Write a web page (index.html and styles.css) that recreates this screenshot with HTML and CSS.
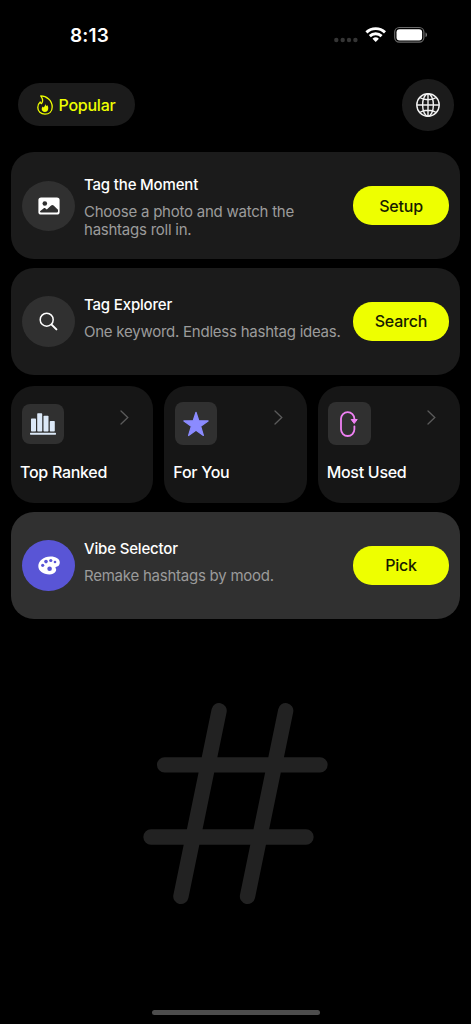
FILE: index.html
```html
<!DOCTYPE html>
<html lang="en">
<head>
<meta charset="utf-8">
<title>Hashtags</title>
<link rel="stylesheet" href="styles.css">
</head>
<body>
<div class="screen">
  <div class="status">
    <span class="time">8:13</span>
    <svg class="status-icons" width="96" height="20" viewBox="332 25 96 20">
      <g fill="#353535"><circle cx="336.3" cy="40" r="2.2"/><circle cx="342.7" cy="40" r="2.2"/><circle cx="349" cy="40" r="2.2"/><circle cx="355.4" cy="40" r="2.2"/></g>
      <g fill="none" stroke="#fff" stroke-width="2.9"><path d="M366.4 32.400a13.400 13.400 0 0 1 18.600 0"/><path d="M369.800 36.100a8.600 8.600 0 0 1 11.800 0"/></g>
      <path fill="#fff" d="M372.500 38.700a4.800 4.800 0 0 1 6.400 0l-3.200 3.300z"/>
      <rect x="394.700" y="27.500" width="29.200" height="14.600" rx="4.600" fill="none" stroke="#6a6a6a" stroke-width="1.200"/>
      <rect x="396.500" y="29.200" width="25.600" height="11.200" rx="3" fill="#fff"/>
      <path fill="#777" d="M425.500 32.500c2 .6 2 4 0 4.600z"/>
    </svg>
  </div>
  <header class="header">
    <button class="popular">
      <svg width="16" height="20" viewBox="0 0 16 20"><path fill="none" stroke="#eeff00" stroke-width="1.300" stroke-linejoin="round" d="M3.700.9C9.500.9 15.200 5.500 15.200 12c0 4.400-3 7.200-7.200 7.200S.8 16.400.8 12.500c0-2.300.9-4.100 2.400-5.500.2.900.7 1.400 1.300 1.600C6.200 6.600 5.700 3.500 3.700.9z"/><path fill="#eeff00" d="M8.300 8.500c.1 1.200.5 1.800 1.200 2.500.4-.2.5-.5.600-.9 1 1.200 1.300 2.500 1.100 3.800-.3 1.900-1.600 3-3.300 3-1.900 0-3.200-1.100-3.200-2.900 0-1.100.5-1.900 1.200-2.500l.6.9c1.200-.9 1.800-2.300 1.800-3.900z"/></svg>
      <span>Popular</span>
    </button>
    <button class="globe" aria-label="Language">
      <svg width="24" height="24" viewBox="0 0 24 24" fill="none" stroke="#f2f2f2" stroke-width="1.400"><circle cx="12" cy="12" r="11.200"/><ellipse cx="12" cy="12" rx="5.400" ry="11.200"/><path d="M12 .8v22.400M.8 12h22.400M3.700 4.500c4.500 3 12.100 3 16.600 0M3.700 19.500c4.500-3 12.100-3 16.600 0"/></svg>
    </button>
  </header>
  <main class="content">
    <section class="card card-photo">
      <span class="badge badge-photo"><svg width="22" height="18" viewBox="0 0 22 18"><rect x=".4" y=".4" width="21.200" height="17.200" rx="2.700" fill="#fff"/><circle cx="6.800" cy="6.500" r="2.300" fill="#303030"/><path fill="#303030" d="M2 14.300l3.500-2.900c.7-.6 1.300-.6 2 0l1.300 1.100 4.300-4.100c.8-.7 1.700-.7 2.500 0l4.400 4.300v1.500c0 .9-.5 1.400-1.400 1.400H3.400c-.9 0-1.400-.4-1.400-1.300z"/></svg></span>
      <div class="copy"><h2>Tag the Moment</h2><p>Choose a photo and watch the<br>hashtags roll in.</p></div>
      <button class="action">Setup</button>
    </section>
    <section class="card card-explorer">
      <span class="badge"><svg width="19" height="19" viewBox="0 0 19 19" fill="none" stroke="#fff" stroke-linecap="round"><circle cx="7.700" cy="7.700" r="6.500" stroke-width="1.500"/><path stroke-width="2" d="M12.600 12.600l4.800 4.800"/></svg></span>
      <div class="copy"><h2>Tag Explorer</h2><p>One keyword. Endless hashtag ideas.</p></div>
      <button class="action">Search</button>
    </section>
    <div class="tiles">
      <section class="tile">
        <div class="tile-top"><span class="square square-chart"><svg width="26" height="22" viewBox="0 0 26 22" fill="#dce9f8"><rect x="1" y="5.500" width="5" height="13" rx=".7"/><rect x="7.200" y=".3" width="5" height="18.200" rx=".7"/><rect x="13.500" y="2.800" width="5" height="15.700" rx=".7"/><rect x="19.800" y="8" width="5" height="10.500" rx=".7"/><rect x="0" y="19.800" width="26" height="1.900" rx=".6"/></svg></span><svg class="chevron" width="9" height="15" viewBox="0 0 9 15"><path d="M1 1l6.800 6.500L1 14"/></svg></div>
        <h2>Top Ranked</h2>
      </section>
      <section class="tile">
        <div class="tile-top"><span class="square"><svg width="26" height="26" viewBox="0 0 26 26"><path fill="#8b8bff" stroke="#8b8bff" stroke-width="1.200" stroke-linejoin="round" d="M13 1.300l2.800 8.500 9.300.1-7.400 5.400 2.700 9.200-7.400-5.300-7.400 5.300 2.700-9.200L.9 9.900l9.300-.1z"/></svg></span><svg class="chevron" width="9" height="15" viewBox="0 0 9 15"><path d="M1 1l6.800 6.500L1 14"/></svg></div>
        <h2>For You</h2>
      </section>
      <section class="tile">
        <div class="tile-top"><span class="square"><svg width="18" height="26" viewBox="0 0 18 26"><path fill="none" stroke="#f081f4" stroke-width="1.800" stroke-linecap="round" d="M14.400 9V7.800A6.700 6.700 0 0 0 1 7.800v10.500a6.700 6.700 0 0 0 13.400 0v-3"/><path fill="#f081f4" stroke="#f081f4" stroke-linejoin="round" d="M11.200 8.500h6l-3 4z"/></svg></span><svg class="chevron" width="9" height="15" viewBox="0 0 9 15"><path d="M1 1l6.800 6.500L1 14"/></svg></div>
        <h2>Most Used</h2>
      </section>
    </div>
    <section class="card card-vibe">
      <span class="badge badge-vibe"><svg width="22" height="19" viewBox="0 0 22 19"><path fill="#fff" d="M12.500.5c5.500 0 9.300 2.500 9.300 6 0 2.300-1.400 4-3.400 4.300-.9.200-1.200.8-.7 1.500.8 1.200.6 2.500-.4 3.700-1.200 1.500-3.200 2.400-5.800 2.400C5 18.400.3 15 .3 10S5.500.5 12.500.5z"/><g fill="#5955d6"><circle cx="4.700" cy="9.300" r="1.600"/><circle cx="8" cy="5.600" r="1.800"/><circle cx="12.800" cy="4.500" r="1.600"/><circle cx="17" cy="6" r="1.300"/><circle cx="11.600" cy="12.800" r="2.300"/></g></svg></span>
      <div class="copy"><h2>Vibe Selector</h2><p>Remake hashtags by mood.</p></div>
      <button class="action">Pick</button>
    </section>
    <svg class="hash" width="186" height="204" viewBox="142 702 186 204" fill="none" stroke="#222" stroke-width="15.300" stroke-linecap="round"><path d="M219.100 710.700L180.900 896.400M285.700 710.700L247.500 896.400M164.600 764.800H320M151 837H306"/></svg>
  </main>
  <div class="home"></div>
</div>
</body>
</html>
```
FILE: styles.css
```css
* { box-sizing: border-box; }
body { margin: 0; background: #000; font-family: Inter, "Liberation Sans", sans-serif; color: #fff; }
button { border: 0; padding: 0; font: inherit; }
svg { display: block; flex: none; }
h2, p { margin: 0; white-space: nowrap; }
.screen { width: 471px; height: 1024px; display: flex; flex-direction: column; background: #000; overflow: hidden; }
.status { height: 69.400px; padding: 25px 43px 0 70px; display: flex; justify-content: space-between; align-items: flex-start; }
.time { font-size: 19px; line-height: 21px; font-weight: 600; letter-spacing: 0.200px; }
.header { height: 71px; padding: 0 17.500px; display: flex; align-items: center; justify-content: space-between; }
.popular { width: 117.500px; height: 43px; border-radius: 22px; background: #1b1b1b; color: #eeff00; display: flex; align-items: center; padding-left: 19px; gap: 6px; font-size: 16px; font-weight: 500; letter-spacing: -0.250px; }
.globe { width: 51.500px; height: 51.500px; border-radius: 50%; background: #1b1b1b; display: flex; align-items: center; justify-content: center; }
.content { padding: 12px 11px 0; display: flex; flex-direction: column; }
.card { height: 107px; border-radius: 23px; background: #1b1b1b; display: flex; align-items: center; padding: 0 11px; }
.card-photo { height: 106.600px; }
.card-explorer { margin-top: 9px; }
.card-vibe { margin-top: 9px; background: #303030; }
.badge { width: 53px; height: 51.500px; border-radius: 50%; background: #303030; display: flex; align-items: center; justify-content: center; flex: none; }
.badge-photo { height: 50px; }
.badge-vibe { background: #5955d6; }
.copy { flex: 1; min-width: 0; padding: 0 0 6px 9px; }
.card-photo .copy { padding: 3px 0 0 9px; }
.copy h2 { font-size: 15px; line-height: 18px; font-weight: 500; letter-spacing: -0.170px; }
.copy p { font-size: 15px; line-height: 18px; margin-top: 9px; color: #9b9b9b; letter-spacing: -0.240px; }
.action { width: 96px; height: 38.500px; border-radius: 19px; background: #eeff00; color: #171b00; font-size: 16px; font-weight: 500; letter-spacing: -0.200px; flex: none; }
.tiles { display: flex; gap: 11px; margin-top: 11px; }
.tile { flex: 1; height: 117px; border-radius: 23px; background: #161616; padding: 16.400px 9px 0; }
.tile-top { display: flex; justify-content: space-between; padding: 0 15px 0 1.500px; height: 61px; }
.square { width: 42.500px; height: 43px; border-radius: 8px; background: #303030; display: flex; align-items: center; justify-content: center; }
.square-chart { height: 40px; margin-top: 2px; }
.chevron { margin-top: 8px; fill: none; stroke: #5b5b5b; stroke-width: 1.300; stroke-linecap: round; }
.tile h2 { font-size: 16px; line-height: 18px; font-weight: 500; letter-spacing: -0.280px; }
.hash { margin: 83px 0 0 131px; }
.home { width: 168px; height: 5px; border-radius: 3px; background: #4d4d4d; margin: auto auto 9px 151.500px; }
```
